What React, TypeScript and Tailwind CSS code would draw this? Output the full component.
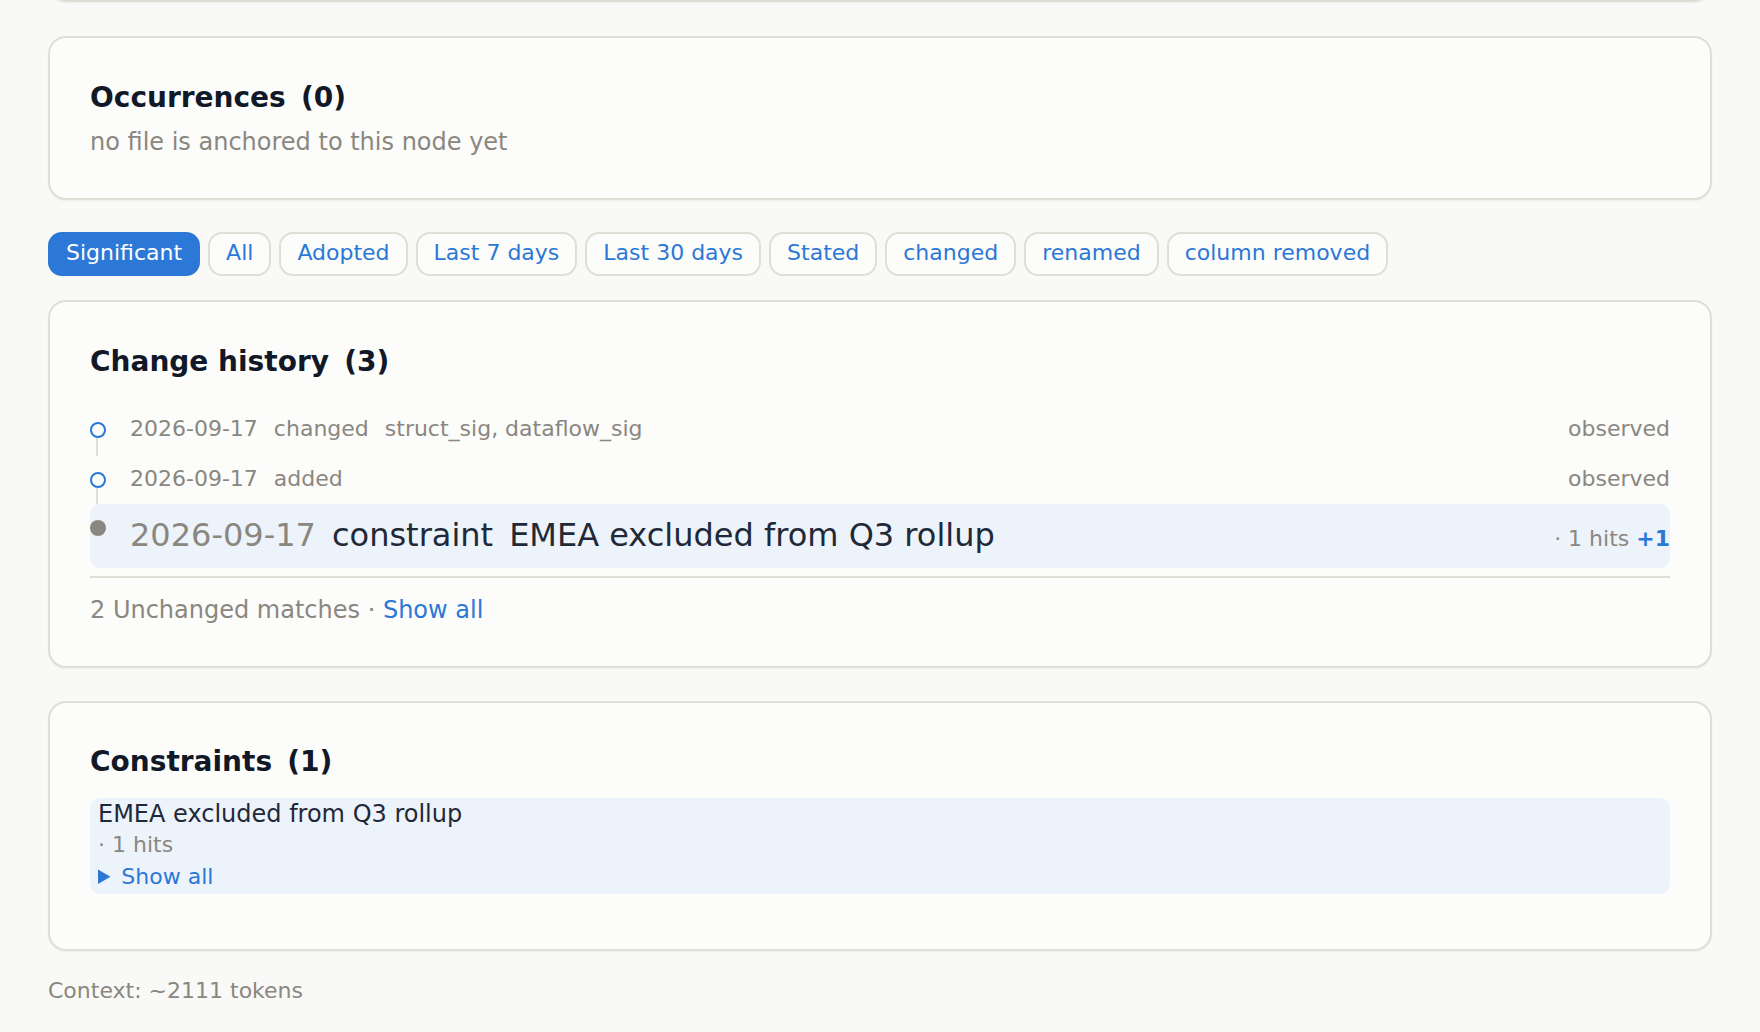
export default function App() {
  const chips = ["All", "Adopted", "Last 7 days", "Last 30 days", "Stated", "changed", "renamed", "column removed"];
  const card = "rounded-[18px] border-2 border-[#dfdfd7] bg-[#fcfcfa] shadow-[0_1px_2px_rgba(0,0,0,0.05)]";
  const title = "text-[28px] leading-[34px] font-bold text-[#111827]";
  const count = "ml-[5.5px]";
  return (
    <div className="h-[1032px] overflow-hidden bg-[#f9f9f7] px-[48px] font-['DejaVu_Sans',sans-serif] text-[22px] text-[#8a8780]">
      <div className={`-mt-[40px] h-[42px] ${card}`} />
      <section className={`mt-[34px] h-[164px] px-[40px] pt-[43px] ${card}`}>
        <h2 className={title}>Occurrences <span className={count}>(0)</span></h2>
        <p className="mt-[9px] text-[24px] leading-[36px]">no file is anchored to this node yet</p>
      </section>
      <nav className="mt-[32px] flex h-[44px] gap-[8px] leading-[30px]">
        <span className="flex items-center rounded-[14px] bg-[#2b78d6] px-[18px] pb-[2px] text-white">Significant</span>
        {chips.map((c) => (
          <span key={c} className="flex items-center rounded-[14px] border-2 border-[#dfdfd7] bg-[#fcfcfa] px-[16px] pb-[2px] text-[#2b78d6]">{c}</span>
        ))}
      </nav>
      <section className={`mt-[24px] h-[368px] px-[40px] pt-[43px] ${card}`}>
        <h2 className={title}>Change history <span className={count}>(3)</span></h2>
        <div className="mt-[34px] flex h-[50px] gap-[16px] leading-[32px]">
          <div className="mr-[8px] w-[16px]">
            <div className="mt-[9px] size-[16px] rounded-full border-2 border-[#2b78d6]" />
            <div className="ml-[6px] h-[18px] w-[2px] bg-[#dfdfd7]" />
          </div>
          <span>2026-09-17</span><span>changed</span><span>struct_sig, dataflow_sig</span>
          <span className="ml-auto">observed</span>
        </div>
        <div className="flex h-[50px] gap-[16px] leading-[32px]">
          <div className="mr-[8px] w-[16px]">
            <div className="mt-[9px] size-[16px] rounded-full border-2 border-[#2b78d6]" />
            <div className="ml-[6px] h-[16px] w-[2px] bg-[#dfdfd7]" />
          </div>
          <span>2026-09-17</span><span>added</span>
          <span className="ml-auto">observed</span>
        </div>
        <div className="-mt-[9px] flex h-[64px] items-center rounded-[10px] bg-[#edf3fb] pb-[2px]">
          <div className="mb-[14px] size-[16px] rounded-full bg-[#8a8780]" />
          <span className="ml-[24px] text-[32px]">2026-09-17</span>
          <span className="ml-[16px] text-[32px] text-[#1f2937]">constraint</span>
          <span className="ml-[16px] text-[32px] text-[#1f2937]">EMEA excluded from Q3 rollup</span>
          <span className="ml-auto mt-[6px]">· 1 hits <b className="text-[#2b78d6]">+1</b></span>
        </div>
        <div className="mt-[8px] h-[2px] bg-[#dfdfd7]" />
        <p className="mt-[14px] text-[24px] leading-[36px]">2 Unchanged matches · <a className="text-[#2b78d6]">Show all</a></p>
      </section>
      <section className={`mt-[33px] h-[250px] px-[40px] pt-[42px] ${card}`}>
        <h2 className={title}>Constraints <span className={count}>(1)</span></h2>
        <div className="mt-[19px] h-[96px] rounded-[10px] bg-[#edf3fb] px-[8px]">
          <div className="text-[24px] leading-[32px] text-[#1f2937]">EMEA excluded from Q3 rollup</div>
          <div className="leading-[30px]">· 1 hits</div>
          <details className="mt-[1px] leading-[32px] text-[#2b78d6]"><summary>Show all</summary></details>
        </div>
      </section>
      <p className="mt-[24px] leading-[32px]">Context: ~2111 tokens</p>
    </div>
  );
}
